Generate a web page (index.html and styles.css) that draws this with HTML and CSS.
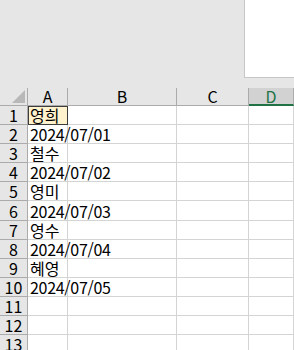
FILE: index.html
```html
<!DOCTYPE html>
<html lang="ko">
<head>
    <meta charset="UTF-8">
    <meta name="viewport" content="width=device-width, initial-scale=1.0">
    <title>Sheet1</title>
    <link rel="stylesheet" href="styles.css">
</head>
<body>
    <div class="ribbon">
        <div class="side-panel"></div>
    </div>
    <div class="sheet">
        <!-- column headers -->
        <div class="corner">
            <svg width="13" height="13" viewBox="0 0 13 13"><polygon points="13,0 13,13 0,13" fill="#b8b8b8"/></svg>
        </div>
        <div class="col-head">A</div>
        <div class="col-head">B</div>
        <div class="col-head">C</div>
        <div class="col-head active">D</div>

        <div class="row-head">1</div>
        <div class="cell picked">영희</div><div class="cell"></div><div class="cell"></div><div class="cell"></div>
        <div class="row-head">2</div>
        <div class="cell wide">2024/07/01</div><div class="cell"></div><div class="cell"></div><div class="cell"></div>
        <div class="row-head">3</div>
        <div class="cell">철수</div><div class="cell"></div><div class="cell"></div><div class="cell"></div>
        <div class="row-head">4</div>
        <div class="cell wide">2024/07/02</div><div class="cell"></div><div class="cell"></div><div class="cell"></div>
        <div class="row-head">5</div>
        <div class="cell">영미</div><div class="cell"></div><div class="cell"></div><div class="cell"></div>
        <div class="row-head">6</div>
        <div class="cell wide">2024/07/03</div><div class="cell"></div><div class="cell"></div><div class="cell"></div>
        <div class="row-head">7</div>
        <div class="cell">영수</div><div class="cell"></div><div class="cell"></div><div class="cell"></div>
        <div class="row-head">8</div>
        <div class="cell wide">2024/07/04</div><div class="cell"></div><div class="cell"></div><div class="cell"></div>
        <div class="row-head">9</div>
        <div class="cell">혜영</div><div class="cell"></div><div class="cell"></div><div class="cell"></div>
        <div class="row-head">10</div>
        <div class="cell wide">2024/07/05</div><div class="cell"></div><div class="cell"></div><div class="cell"></div>
        <div class="row-head">11</div>
        <div class="cell"></div><div class="cell"></div><div class="cell"></div><div class="cell"></div>
        <div class="row-head">12</div>
        <div class="cell"></div><div class="cell"></div><div class="cell"></div><div class="cell"></div>
        <div class="row-head">13</div>
        <div class="cell"></div><div class="cell"></div><div class="cell"></div><div class="cell"></div>
    </div>
</body>
</html>
```

FILE: styles.css
```css
*{
    box-sizing: border-box;
    margin: 0;
    padding: 0;
}
body{
    width: 294px;
    height: 350px;
    overflow: hidden;
    background-color: white;
    font-family: "Noto Sans CJK KR", "Liberation Sans", sans-serif;
    font-size: 16px;
    line-height: 16px;
    color: #000;
}
.ribbon{
    height: 88px;
    background-color: #e6e6e6;
    display: flex;
    justify-content: flex-end;
}
.side-panel{
    width: 50px;
    height: 78px;
    background-color: #fff;
    border-left: 1px solid #c6c6c6;
    border-bottom: 1px solid #c6c6c6;
}
.sheet{
    display: grid;
    grid-template-columns: 28px 40px 109px 72px 1fr;
    grid-template-rows: 18px;
    grid-auto-rows: 19.1px;
}
.corner,
.col-head,
.row-head{
    background-color: #e6e6e6;
    border-right: 1px solid #ababab;
    border-bottom: 1px solid #ababab;
}
.corner{
    display: flex;
    justify-content: flex-end;
    align-items: flex-end;
    padding: 0 2px 2px 0;
}
.corner svg{
    display: block;
}
.col-head{
    display: flex;
    justify-content: center;
    align-items: flex-end;
    padding-bottom: 1px;
}
.col-head.active{
    background-color: #d2d2d2;
    color: #217346;
    border-bottom: 2px solid #217346;
    padding-bottom: 0;
}
.row-head{
    display: flex;
    justify-content: center;
    align-items: flex-end;
    padding-bottom: 1px;
}
.cell{
    display: flex;
    align-items: flex-end;
    padding: 0 0 1px 2px;
    border-right: 1px solid #d4d4d4;
    border-bottom: 1px solid #d4d4d4;
    white-space: nowrap;
}
.cell.wide{
    letter-spacing: -0.3px;
}
.picked{
    background-color: #fff2cc;
    box-shadow: inset 1px 1px 0 #3c3c3c;
    border-right-color: #3c3c3c;
    border-bottom-color: #3c3c3c;
}
```
